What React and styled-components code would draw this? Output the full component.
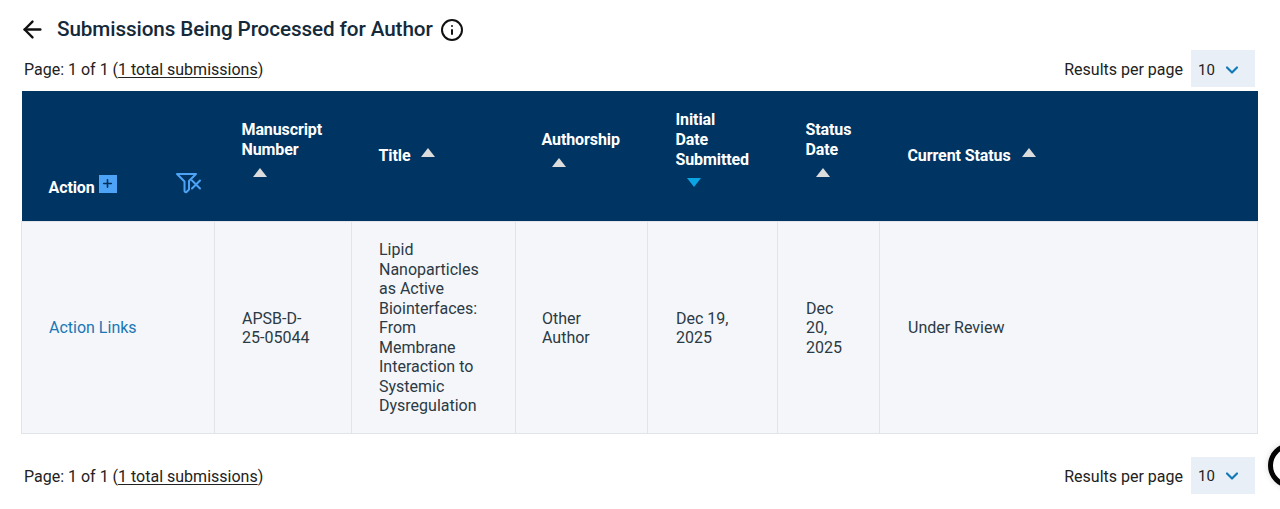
import React from 'react';
import styled, { createGlobalStyle } from 'styled-components';
import { ArrowLeft, ChevronDown, Info, Plus } from 'lucide-react';

const GlobalStyle = createGlobalStyle`
  html, body {
    margin: 0;
    padding: 0;
    background: #fff;
    overflow: hidden;
  }
  body {
    font-family: Roboto, "Liberation Sans", sans-serif;
    color: #212529;
  }
`;

const Page = styled.div`
  width: 1280px;
  height: 509px;
  box-sizing: border-box;
  padding: 13px 25px 0 21px;
  position: relative;
  overflow: hidden;
`;

const TitleRow = styled.div`
  display: flex;
  align-items: center;
  height: 32px;
  padding-left: 1px;
`;

const BackButton = styled.span`
  display: flex;
  width: 38px;
  margin-left: -3px;
  color: #111;
`;

const Heading = styled.h1`
  margin: 0 7px 0 0;
  font-size: 20.7px;
  font-weight: 500;
  letter-spacing: -0.1px;
  color: #14293a;
`;

const InfoIcon = styled(Info)`
  position: relative;
  top: 1px;
  color: #111;
`;

const PagerRow = styled.div`
  display: flex;
  align-items: center;
  justify-content: space-between;
  height: 37px;
  margin-top: 5px;
  padding-left: 3px;
  font-size: 16px;
  color: #222;
`;

const PagerLabel = styled.span`
  padding-top: 2px;
`;

const Total = styled.span`
  text-decoration: underline;
  text-underline-offset: 2px;
`;

const PerPage = styled.div`
  display: flex;
  align-items: center;
  gap: 8px;
`;

const PerPageSelect = styled.div`
  display: flex;
  align-items: center;
  justify-content: space-between;
  box-sizing: border-box;
  width: 64px;
  height: 37px;
  padding: 2px 13px 0 7px;
  background: #e9eff7;
  font-size: 15px;
  color: #222;
  svg { color: #1279b8; }
`;

const Table = styled.table`
  width: 1236px;
  margin-top: 4px;
  border-collapse: collapse;
  table-layout: fixed;
`;

const HeadRow = styled.tr`
  height: 130px;
  background: #003462;
`;

const HeadCell = styled.th`
  box-sizing: border-box;
  padding: 0 8px ${props => props.$lift ? '14px' : '0'} ${props => props.$pad}px;
  width: ${props => props.$width}px;
  font-size: 16px;
  line-height: 20px;
  font-weight: 700;
  letter-spacing: -0.1px;
  color: #fff;
  text-align: left;
  vertical-align: middle;
`;

const ActionCell = styled(HeadCell)`
  vertical-align: bottom;
  padding-bottom: 23px;
`;

const ActionHead = styled.div`
  display: flex;
  align-items: flex-end;
`;

const PlusBox = styled.span`
  display: flex;
  align-items: center;
  justify-content: center;
  width: 18px;
  height: 18px;
  margin: 0 0 5px 4px;
  background: #4da3f5;
  color: #00305c;
`;

const FilterIcon = styled.svg`
  margin: 0 0 0 58px;
  position: relative;
  top: -3px;
`;

const SortArrow = styled.span`
  display: ${props => props.$inline ? 'inline-block' : 'block'};
  width: 0;
  height: 0;
  border-left: 7px solid transparent;
  border-right: 7px solid transparent;
  border-bottom: ${props => props.$down ? '0' : '9px solid #dcdcdc'};
  border-top: ${props => props.$down ? '9px solid #0ba5e3' : '0'};
  margin: ${props => props.$inline ? `0 0 9px ${props.$gap}px` : `8px 0 0 ${props.$gap}px`};
  vertical-align: middle;
`;

const BodyRow = styled.tr`
  height: 212px;
  background: #f4f6fa;
`;

const BodyCell = styled.td`
  box-sizing: border-box;
  padding: 2px 28px 0 ${props => props.$pad}px;
  border: 1px solid #e1e5ea;
  font-size: 16px;
  line-height: 19.5px;
  color: #2b3a44;
  vertical-align: middle;
`;

const ActionLink = styled.a`
  color: #1a76b4;
`;

const BottomPager = styled(PagerRow)`
  margin-top: 23px;
`;

const ChatBubble = styled.div`
  position: absolute;
  left: 1268px;
  top: 443px;
  width: 45px;
  height: 45px;
  box-sizing: border-box;
  border: 5px solid #050505;
  border-radius: 50%;
  background: #fff;
  box-shadow: 0 0 6px rgba(0, 0, 0, 0.15);
`;

const columns = [
  { key: 'manuscript', width: 137, pad: 27, label: <>Manuscript<br />Number</>, gap: 11, value: 'APSB-D-25-05044' },
  { key: 'title', width: 164, pad: 27, label: 'Title', inline: true, gap: 11, value: 'Lipid Nanoparticles as Active Biointerfaces: From Membrane Interaction to Systemic Dysregulation' },
  { key: 'authorship', width: 132, pad: 26, label: 'Authorship', gap: 10, value: 'Other Author' },
  { key: 'submitted', width: 130, pad: 28, label: <>Initial<br />Date<br />Submitted</>, down: true, gap: 11, value: 'Dec 19, 2025' },
  { key: 'statusDate', width: 102, pad: 28, label: <>Status<br />Date</>, gap: 10, value: 'Dec 20, 2025' },
  { key: 'status', width: 378, pad: 28, label: 'Current Status', inline: true, gap: 11, value: 'Under Review' },
];

const Pager = ({ as: Row = PagerRow }) => (
  <Row>
    <PagerLabel>Page: 1 of 1 (<Total>1 total submissions</Total>)</PagerLabel>
    <PerPage>
      <PagerLabel>Results per page</PagerLabel>
      <PerPageSelect>
        10
        <ChevronDown size={20} strokeWidth={2.6} />
      </PerPageSelect>
    </PerPage>
  </Row>
);

const App = () => (
  <Page>
    <GlobalStyle />
    <TitleRow>
      <BackButton><ArrowLeft size={27} strokeWidth={2.1} /></BackButton>
      <Heading>Submissions Being Processed for Author</Heading>
      <InfoIcon size={24} strokeWidth={2} />
    </TitleRow>
    <Pager />
    <Table>
      <thead>
        <HeadRow>
          <ActionCell $width={193} $pad={27}>
            <ActionHead>
              Action
              <PlusBox><Plus size={13} strokeWidth={3} /></PlusBox>
              <FilterIcon width="28" height="24" viewBox="0 0 28 24" fill="none" stroke="#4da3f5" strokeWidth="2" strokeLinejoin="round" strokeLinecap="round">
                <path d="M2 3h19l-7 7v8.500l-2.500 2.500c-1 0.500-2 0-2-1.500v-9z" />
                <path d="M17 9.500l8 8M25 9.500l-8 8" />
              </FilterIcon>
            </ActionHead>
          </ActionCell>
          {columns.map(col => (
            <HeadCell key={col.key} $width={col.width} $pad={col.pad} $lift={!col.inline}>
              {col.label}
              <SortArrow $inline={col.inline} $down={col.down} $gap={col.gap} />
            </HeadCell>
          ))}
        </HeadRow>
      </thead>
      <tbody>
        <BodyRow>
          <BodyCell $pad={27}><ActionLink>Action Links</ActionLink></BodyCell>
          {columns.map(col => (
            <BodyCell key={col.key} $pad={col.pad}>{col.value}</BodyCell>
          ))}
        </BodyRow>
      </tbody>
    </Table>
    <Pager as={BottomPager} />
    <ChatBubble />
  </Page>
);

export default App;
